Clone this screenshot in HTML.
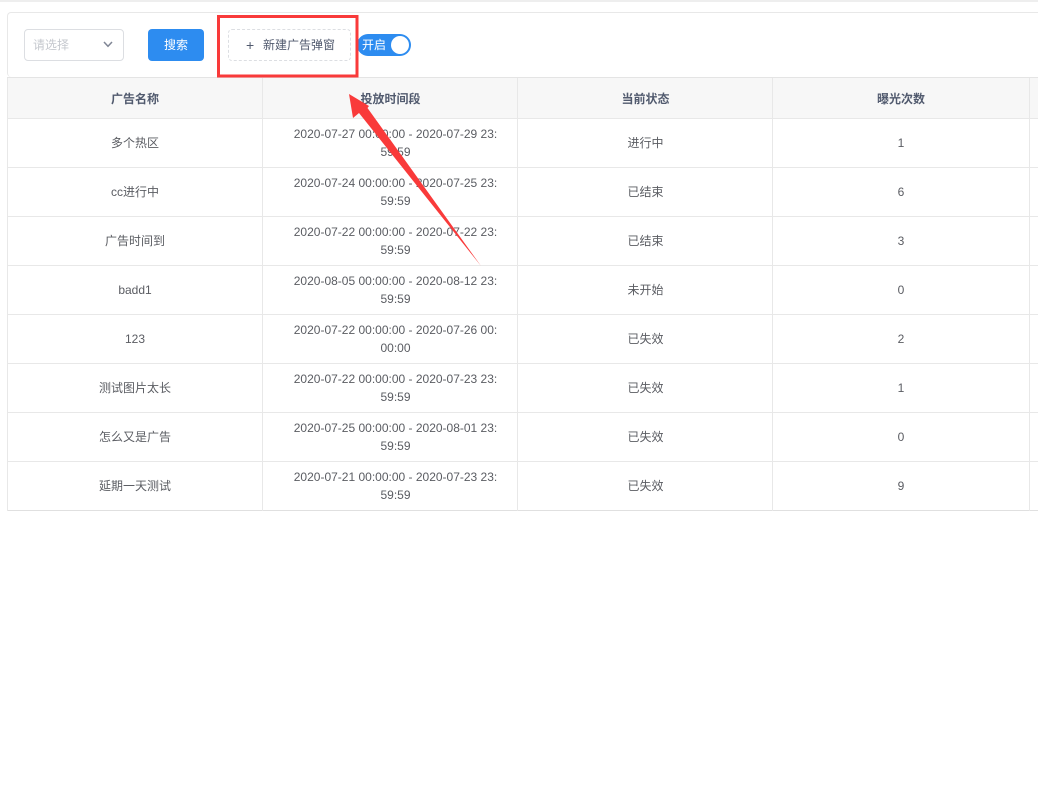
<!DOCTYPE html>
<html><head><meta charset="utf-8">
<style>
html,body{margin:0;padding:0;background:#fff;}
body{width:1038px;height:792px;position:relative;overflow:hidden;font-family:"Liberation Sans","Noto Sans CJK SC",sans-serif;font-size:12px;color:#5a5c62;}
.a{position:absolute;}
.h{position:absolute;background:#e8e8e8;height:1px;}
.v{position:absolute;background:#e8e8e8;width:1px;top:78px;height:433px;}
.c{position:absolute;width:255px;text-align:center;line-height:18px;}
.t{font-weight:bold;color:#515a6e;line-height:18px;top:90px;}
</style></head><body>
<div class="a" style="left:0;top:0;width:1038px;height:2px;background:#eeeeee"></div>
<div class="a" style="left:7px;top:12px;width:1040px;height:65px;border:1px solid #e8e8e8;border-radius:4px;box-sizing:border-box;border-bottom:0"></div>
<div class="a" style="left:7px;top:77px;width:1031px;height:41px;background:#f7f7f7"></div>

<div class="a" style="left:24px;top:29px;width:100px;height:32px;box-sizing:border-box;border:1px solid #dcdee2;border-radius:4px;color:#c5c8ce;line-height:30px;padding-left:8px">请选择</div>
<svg class="a" style="left:102px;top:40px" width="12" height="9"><path d="M2 2L6 6.300L10 2" fill="none" stroke="#808695" stroke-width="1.500"/></svg>
<div class="a" style="left:148px;top:29px;width:56px;height:32px;background:#2d8cf0;border-radius:4px;color:#fff;text-align:center;line-height:32px">搜索</div>
<div class="a" style="left:228px;top:29px;width:123px;height:32px;box-sizing:border-box;border:1px dashed #dcdee2;border-radius:4px;line-height:30px;color:#515a6e;white-space:nowrap"><span class="a" style="left:17px;top:0;font-size:14px">+</span><span class="a" style="left:34px;top:0">新建广告弹窗</span></div>
<div class="a" style="left:357px;top:34px;width:54px;height:22px;background:#2d8cf0;border-radius:11px"></div>
<div class="a" style="left:362px;top:34px;line-height:22px;color:#fff">开启</div>
<div class="a" style="left:391px;top:36px;width:18px;height:18px;background:#fff;border-radius:50%"></div>

<div class="h" style="left:7px;top:77px;width:1031px;height:1px;background:#e4e4e4"></div>
<div class="h" style="left:7px;top:118px;width:1031px"></div>
<div class="h" style="left:7px;top:167px;width:1031px"></div>
<div class="h" style="left:7px;top:216px;width:1031px"></div>
<div class="h" style="left:7px;top:265px;width:1031px"></div>
<div class="h" style="left:7px;top:314px;width:1031px"></div>
<div class="h" style="left:7px;top:363px;width:1031px"></div>
<div class="h" style="left:7px;top:412px;width:1031px"></div>
<div class="h" style="left:7px;top:461px;width:1031px"></div>
<div class="h" style="left:7px;top:510px;width:1031px;background:#e0e0e0"></div>
<div class="v" style="left:7px"></div>
<div class="v" style="left:262px"></div>
<div class="v" style="left:517px"></div>
<div class="v" style="left:772px"></div>
<div class="v" style="left:1029px"></div>

<div class="c t" style="left:7.500px">广告名称</div>
<div class="c t" style="left:263px">投放时间段</div>
<div class="c t" style="left:518px">当前状态</div>
<div class="c t" style="left:773px;width:256px">曝光次数</div>

<div class="c" style="left:7.500px;top:134px">多个热区</div>
<div class="c" style="left:268px;top:125px">2020-07-27 00:00:00 - 2020-07-29 23:<br>59:59</div>
<div class="c" style="left:518px;top:134px">进行中</div>
<div class="c" style="left:773px;width:256px;top:134px">1</div>

<div class="c" style="left:7.500px;top:183px">cc进行中</div>
<div class="c" style="left:268px;top:174px">2020-07-24 00:00:00 - 2020-07-25 23:<br>59:59</div>
<div class="c" style="left:518px;top:183px">已结束</div>
<div class="c" style="left:773px;width:256px;top:183px">6</div>

<div class="c" style="left:7.500px;top:232px">广告时间到</div>
<div class="c" style="left:268px;top:223px">2020-07-22 00:00:00 - 2020-07-22 23:<br>59:59</div>
<div class="c" style="left:518px;top:232px">已结束</div>
<div class="c" style="left:773px;width:256px;top:232px">3</div>

<div class="c" style="left:7.500px;top:281px">badd1</div>
<div class="c" style="left:268px;top:272px">2020-08-05 00:00:00 - 2020-08-12 23:<br>59:59</div>
<div class="c" style="left:518px;top:281px">未开始</div>
<div class="c" style="left:773px;width:256px;top:281px">0</div>

<div class="c" style="left:7.500px;top:330px">123</div>
<div class="c" style="left:268px;top:321px">2020-07-22 00:00:00 - 2020-07-26 00:<br>00:00</div>
<div class="c" style="left:518px;top:330px">已失效</div>
<div class="c" style="left:773px;width:256px;top:330px">2</div>

<div class="c" style="left:7.500px;top:379px">测试图片太长</div>
<div class="c" style="left:268px;top:370px">2020-07-22 00:00:00 - 2020-07-23 23:<br>59:59</div>
<div class="c" style="left:518px;top:379px">已失效</div>
<div class="c" style="left:773px;width:256px;top:379px">1</div>

<div class="c" style="left:7.500px;top:428px">怎么又是广告</div>
<div class="c" style="left:268px;top:419px">2020-07-25 00:00:00 - 2020-08-01 23:<br>59:59</div>
<div class="c" style="left:518px;top:428px">已失效</div>
<div class="c" style="left:773px;width:256px;top:428px">0</div>

<div class="c" style="left:7.500px;top:477px">延期一天测试</div>
<div class="c" style="left:268px;top:468px">2020-07-21 00:00:00 - 2020-07-23 23:<br>59:59</div>
<div class="c" style="left:518px;top:477px">已失效</div>
<div class="c" style="left:773px;width:256px;top:477px">9</div>

<svg class="a" style="left:0;top:0" width="1038" height="792">
<rect x="218.500" y="16.500" width="138.500" height="59.500" fill="none" stroke="#f93a3a" stroke-width="3"/>
<path d="M349 94L369 106L367.500 108L481 266L359 113L353 118Z" fill="#f93a3a"/>
</svg>
</body></html>
